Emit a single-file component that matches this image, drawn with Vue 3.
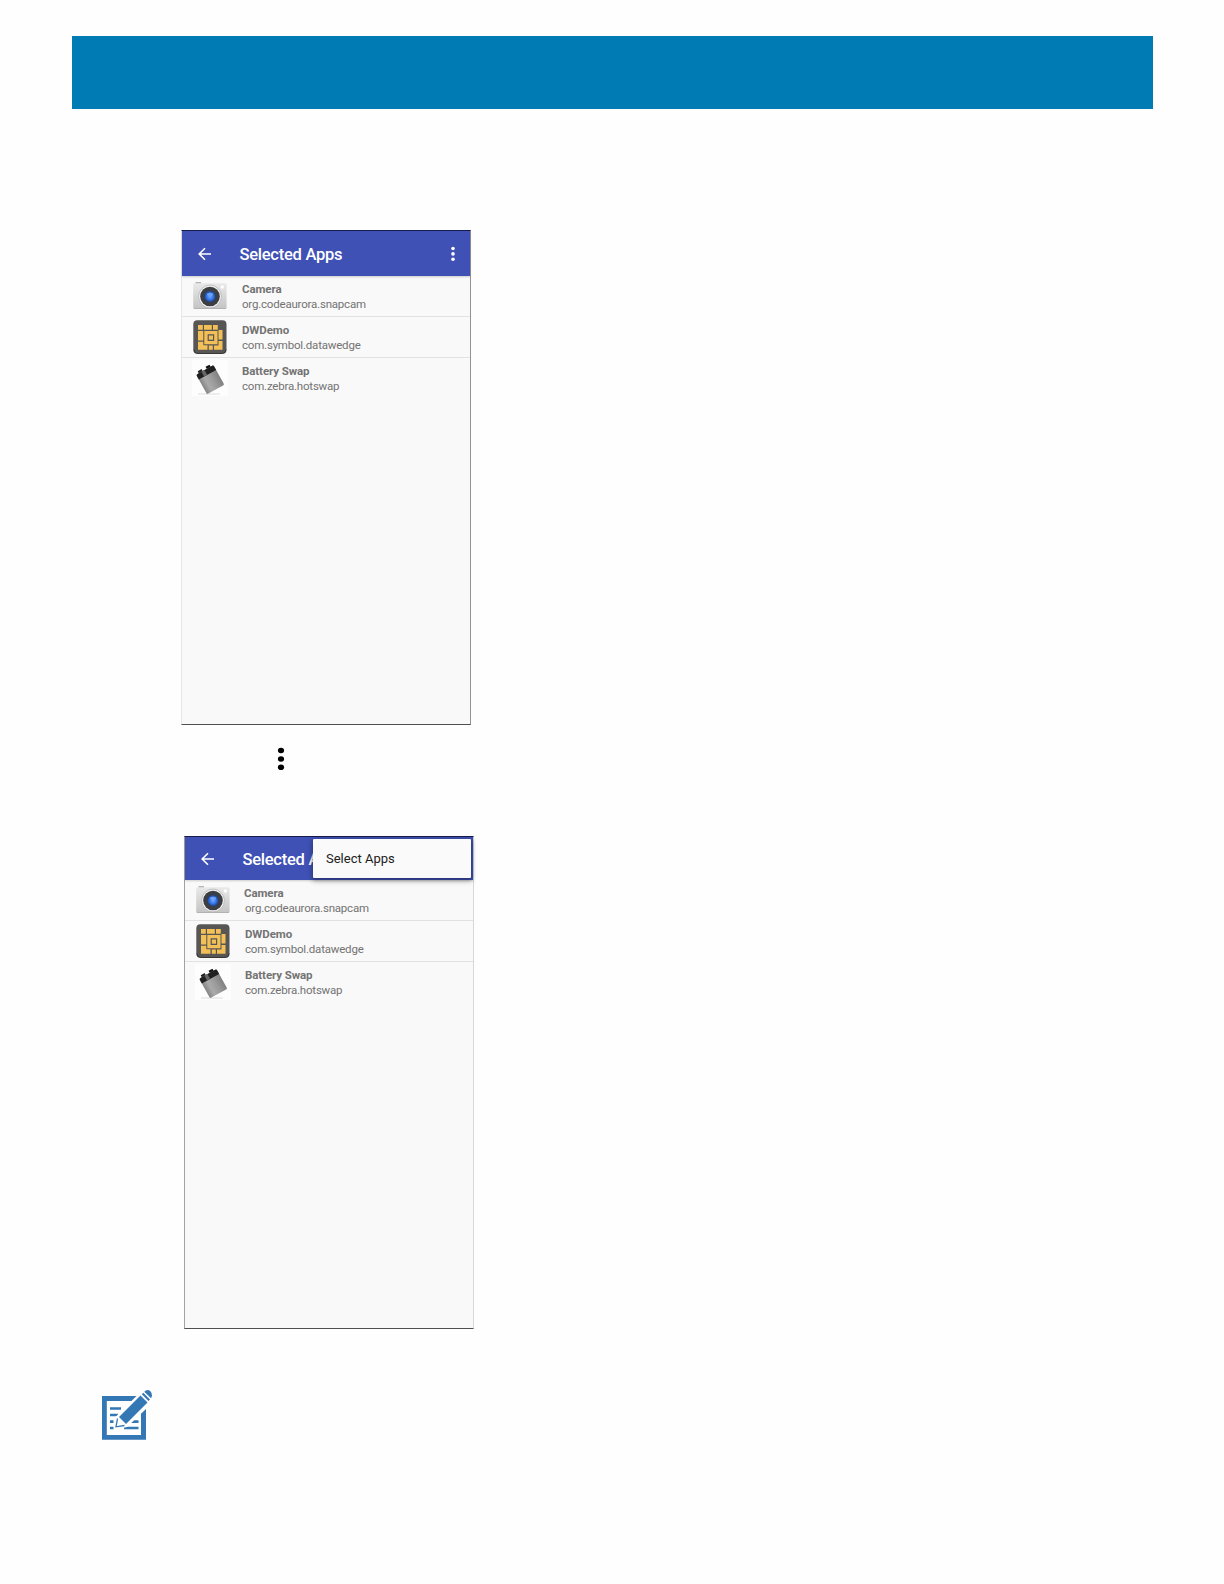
<template>
  <div class="page">
    <div class="banner"></div>

    <div v-for="(screen, i) in screens" :key="i" class="step" :class="'step-' + (i + 1)">
      <div class="phone">
        <div class="toolbar">
          <svg class="back" width="14" height="14" viewBox="0 0 14 14">
            <path d="M13 7H1.4M7 1.2L1.2 7L7 12.8" fill="none" stroke="#fff" stroke-width="1.6" />
          </svg>
          <span class="title">Selected Apps</span>
          <svg v-if="!screen.menu" class="more" width="4" height="16" viewBox="0 0 4 16">
            <circle v-for="y in [2.5, 7.9, 13.2]" :key="y" cx="2" :cy="y" r="1.8" fill="#fff" />
          </svg>
          <div v-if="screen.menu" class="menu">Select Apps</div>
        </div>

        <!-- app list -->
        <div v-for="app in apps" :key="app.pkg" class="row" :class="app.icon">
          <svg v-if="app.icon === 'camera'" class="icon" width="36" height="36" viewBox="0 0 36 36">
            <defs>
              <linearGradient :id="'body' + i" x1="0" y1="0" x2="0" y2="1">
                <stop offset="0" stop-color="#e9e9e9" />
                <stop offset="1" stop-color="#c4c4c4" />
              </linearGradient>
              <radialGradient :id="'lens' + i">
                <stop offset="0" stop-color="#72aaff" />
                <stop offset=".6" stop-color="#3474e4" />
                <stop offset="1" stop-color="#1d4598" />
              </radialGradient>
            </defs>
            <path d="M3.5 5h5.5" stroke="#888" stroke-width="1.2" />
            <rect x="1.2" y="5.2" width="33.4" height="25.5" rx="1.5" :fill="`url(#body${i})`" />
            <path d="M1.8 30.5h32.2" stroke="#aaa" stroke-width=".8" />
            <circle cx="30.3" cy="9" r="1.7" fill="#fff" />
            <circle cx="18" cy="18.5" r="11.4" fill="#f5f5f5" stroke="#aaa" stroke-width=".7" />
            <circle cx="18" cy="18.5" r="9.8" fill="#3b3e43" />
            <circle cx="18" cy="18.5" r="5.5" :fill="`url(#lens${i})`" />
            <ellipse cx="18" cy="16.3" rx="3" ry="1.5" fill="#86b2ff" opacity=".65" />
          </svg>
          <svg v-else-if="app.icon === 'demo'" class="icon" width="36" height="36" viewBox="0 0 36 36">
            <rect x="1.3" y="1.3" width="33.2" height="33.4" rx="4" fill="#575654" />
            <path d="M2 30.5q0 4 4 4h24q4 0 4-4" fill="none" stroke="#393837" />
            <g fill="#f3c057">
              <path d="M6 6h4.8v4.8h-4.8zM12 6h7.8v4.8h-7.8zM21 6h4.8v4.8h-4.8z" />
              <path d="M6 12h5.3v9.5h-5.3zM6 22.8h5.3v3.5h4.2v4.4h-9.5z" />
              <path d="M26.5 11h4v9.5h-4zM26.5 22h4v8.7h-8.5v-4.2h4.5zM16.8 26.5h4v4.2h-4z" />
              <path fill-rule="evenodd" d="M12.3 12h13.2v13.2h-13.2zM15.6 15.3v6.6h6.6v-6.6z" />
              <path d="M16.8 16.5h4.2v4.2h-4.2z" />
            </g>
          </svg>
          <svg v-else class="icon" width="36" height="36" viewBox="0 0 36 36">
            <defs>
              <linearGradient :id="'cell' + i">
                <stop offset="0" stop-color="#858585" />
                <stop offset=".3" stop-color="#aaa" />
                <stop offset=".6" stop-color="#9b9b9b" />
                <stop offset="1" stop-color="#808080" />
              </linearGradient>
            </defs>
            <rect width="36" height="36" fill="#fdfdfd" />
            <path d="M6 34h22" stroke="#ddd" stroke-width="1" />
            <g transform="rotate(-29 18 19)">
              <rect x="11" y="6.2" width="4.5" height="4" fill="#222" />
              <rect x="20" y="6.2" width="4.5" height="4" fill="#111" />
              <rect x="8" y="8.5" width="19.8" height="22.5" rx="1.5" :fill="`url(#cell${i})`" />
              <path d="M8 14V10q0-1.500 1.500-1.500h16.800q1.500 0 1.500 1.500V14z" fill="#202020" />
              <path d="M14 8.500h3.500v5.500h-3.500z" fill="#666" />
            </g>
          </svg>
          <div class="label">
            <div class="name">{{ app.name }}</div>
            <div class="pkg">{{ app.pkg }}</div>
          </div>
        </div>
      </div>

      <svg v-if="i === 0" class="dots" width="8" height="24" viewBox="0 0 8 24">
        <ellipse v-for="y in [3.5, 12, 20.3]" :key="y" cx="4" :cy="y" rx="3.1" ry="2.8" />
      </svg>
    </div>

    <!-- note icon -->
    <svg class="note" width="52" height="52" viewBox="0 0 52 52">
      <path fill="#3477b5" fill-rule="evenodd" d="M0 7H44V50.7H0zM4.8 12V46H39V12z" />
      <path d="M8 19.5h11M8 26h8M8 32.7h3.5M8 39h3.5M28 32.7h8.5M22 39h14.5" stroke="#3477b5" stroke-width="2.7" />
      <!-- pencil with a white gap around it -->
      <path d="M12 41L13.500 28L34.500 7L40 1L52 12L44 20L25 38z" fill="#fff" />
      <path d="M17 28L38.500 6.500L45.500 13.500L24 35z" fill="#3477b5" />
      <path d="M15.500 29.500L14 37.800L22.500 36.500" fill="none" stroke="#3477b5" stroke-width="1.300" />
      <path d="M39.800 5.300L41.300 3.800L48 10.500L46.500 12z" fill="#3477b5" />
      <path d="M42.300 2.800Q45-.500 48.200 2Q51.200 5.500 49 9.300z" fill="#3477b5" />
    </svg>
  </div>
</template>

<script setup>
const apps = [
  { icon: 'camera', name: 'Camera', pkg: 'org.codeaurora.snapcam' },
  { icon: 'demo', name: 'DWDemo', pkg: 'com.symbol.datawedge' },
  { icon: 'battery', name: 'Battery Swap', pkg: 'com.zebra.hotswap' }
]

const screens = [{ menu: false }, { menu: true }]
</script>

<style>
body {
  margin: 0;
  background: #fff;
}
</style>

<style scoped>
.page {
  box-sizing: border-box;
  width: 1224px;
  height: 1584px;
  padding: 36px 71px 0 72px;
  overflow: hidden;
  background: #fefefe;
  font-family: Roboto, sans-serif;
}

.banner {
  height: 72.5px;
  background: #007bb3;
}

.step-1 {
  margin: 121.5px 0 0 109px;
}

.step-2 {
  margin: 65px 0 0 112px;
}

.phone {
  box-sizing: border-box;
  width: 290px;
  height: 495px;
  background: #f9f9f9;
  border: 1px solid #e6e6e6;
  border-top-color: #171c4c;
  border-right-color: #929292;
  border-bottom-color: #505050;
}

.step-2 .phone {
  height: 493px;
  border-left-color: #a2a2a2;
  border-right-color: #d8d8d8;
}

/* toolbar */
.toolbar {
  position: relative;
  display: flex;
  align-items: center;
  height: 45px;
  padding: 0 15px 0 16px;
  background: #3f51b5;
  box-shadow: 0 1px 2px rgba(0, 0, 0, 0.18);
}

.step-2 .toolbar {
  height: 43px;
}

.title {
  margin-left: 27.5px;
  padding-top: 2px;
  color: #fff;
  font-size: 16.5px;
  font-weight: 500;
  letter-spacing: -0.25px;
  line-height: 20px;
  white-space: nowrap;
}

.more {
  margin-left: auto;
}

.menu {
  position: absolute;
  top: 2px;
  right: 2px;
  box-sizing: border-box;
  width: 158px;
  height: 39px;
  padding-left: 13px;
  border-radius: 1px;
  background: #fafafa;
  box-shadow: 0 2px 5px 1px rgba(0, 0, 0, 0.35);
  color: #212121;
  font-size: 13px;
  line-height: 39px;
}

/* list */
.row {
  box-sizing: border-box;
  display: flex;
  height: 41px;
  padding: 2px 0 0 10px;
  border-bottom: 1px solid #e2e2e2;
}

.row.battery {
  border-bottom: 0;
}

.icon {
  flex: none;
}

.label {
  margin-left: 14px;
  padding-top: 4px;
  color: #737373;
  font-size: 11.5px;
  line-height: 15px;
  white-space: nowrap;
}

.name {
  font-weight: 700;
  letter-spacing: -0.1px;
}

.pkg {
  letter-spacing: -0.2px;
}

.step-2 .camera .name {
  margin-left: -1px;
}

/* overflow dots between the screens */
.dots {
  display: block;
  margin: 22px 0 0 96px;
}

.note {
  display: block;
  margin: 60px 0 0 30px;
}
</style>
